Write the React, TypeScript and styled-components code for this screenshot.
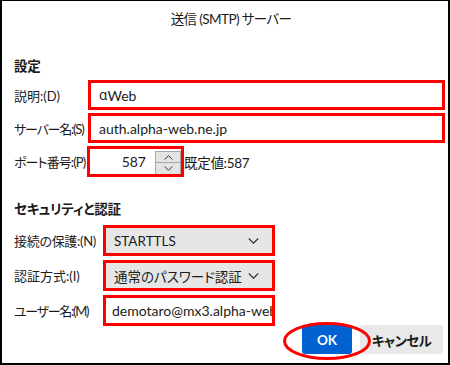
import React from "react";
import styled, { createGlobalStyle } from "styled-components";

const Global = createGlobalStyle`
  html, body { margin: 0; padding: 0; background: #fff; }
  body {
    font-family: "Lato", "Noto Sans CJK JP", sans-serif;
    color: #1b1b1b;
    font-feature-settings: "palt";
  }
`;

const Window = styled.div`
  box-sizing: border-box;
  width: 450px;
  height: 365px;
  border-left: 2px solid #000;
  border-right: 2px solid #000;
  border-top: 1px solid #000;
  border-bottom: 2px solid #000;
  background: #fff;
  display: flex;
  flex-direction: column;
  overflow: hidden;
`;

const Title = styled.div`
  height: 34px;
  display: flex;
  align-items: center;
  justify-content: center;
  font-size: 13.5px;
  letter-spacing: -0.6px;
  padding-left: 12px;
`;

const Body = styled.div`
  display: flex;
  flex-direction: column;
  padding: 0 3px 0 12px;
`;

const SectionTitle = styled.div<{ $top: number; $bottom: number }>`
  margin-top: ${(p) => p.$top}px;
  margin-bottom: ${(p) => p.$bottom}px;
  height: 20px;
  line-height: 20px;
  font-size: 13.5px;
  font-weight: 700;
  letter-spacing: -0.3px;
`;

const Row = styled.div<{ $label: number; $gap?: number }>`
  display: grid;
  grid-template-columns: ${(p) => p.$label}px auto 1fr;
  align-items: center;
  margin-bottom: ${(p) => p.$gap ?? 3}px;
`;

const Label = styled.div<{ $ls?: number }>`
  font-size: 13px;
  letter-spacing: ${(p) => p.$ls ?? 0}px;
  white-space: nowrap;
`;

const RedBox = styled.div<{ $w?: number; $h?: number; $fill?: string; $pad?: number }>`
  box-sizing: border-box;
  height: ${(p) => p.$h ?? 30}px;
  width: ${(p) => (p.$w ? `${p.$w}px` : "auto")};
  border: 3px solid #f00;
  background: ${(p) => p.$fill ?? "#fff"};
  display: flex;
  align-items: center;
  padding: 0 0 0 ${(p) => p.$pad ?? 8}px;
  font-size: 14px;
  white-space: nowrap;
  overflow: hidden;
`;

const WideBox = styled(RedBox)`
  grid-column: 2 / 4;
`;

const Greek = styled.span`
  font-family: "Noto Sans", sans-serif;
  font-size: 13.5px;
`;

const PortBox = styled(RedBox)`
  padding: 0;
  justify-content: flex-end;
  align-items: flex-start;
  gap: 9px;
`;

const PortValue = styled.span`
  align-self: center;
  font-size: 14px;
`;

const Spinner = styled.div`
  display: flex;
  flex-direction: column;
  width: 26px;
  margin-top: 2px;
`;

const SpinBtn = styled.div`
  box-sizing: border-box;
  height: 12px;
  background: #e4e4e4;
  border: 1px solid #a8a8a8;
  display: flex;
  align-items: center;
  justify-content: center;
  & + & { border-top: none; }
`;

const Default = styled.div`
  font-size: 13.5px;
  letter-spacing: -0.3px;
`;

const Select = styled(RedBox)`
  justify-content: space-between;
  padding-right: 13px;
  font-size: 13.5px;
`;

const Buttons = styled.div`
  display: flex;
  justify-content: flex-end;
  gap: 8px;
  margin-top: -1px;
  padding-right: 2px;
`;

const BtnWrap = styled.div`
  position: relative;
  display: flex;
`;

const Button = styled.button<{ $primary?: boolean }>`
  box-sizing: border-box;
  height: 29px;
  width: ${(p) => (p.$primary ? 50 : 83)}px;
  border: none;
  border-radius: 3px;
  background: ${(p) => (p.$primary ? "#0062d1" : "#e9e9e9")};
  color: ${(p) => (p.$primary ? "#fff" : "#1b1b1b")};
  font-family: inherit;
  font-feature-settings: "palt";
  font-size: 13.5px;
  letter-spacing: ${(p) => (p.$primary ? 0 : -0.6)}px;
  font-weight: 700;
  padding: 0;
`;

const Ellipse = styled.svg`
  position: absolute;
  left: -19px;
  top: -3px;
  pointer-events: none;
`;

const Chevron = ({ up = false, w = 9 }: { up?: boolean; w?: number }) => (
  <svg width={w} height={Math.round(w * 0.55)} viewBox="0 0 10 5.5">
    <path
      d={up ? "M0.7 5 L5 0.7 L9.3 5" : "M0.7 0.5 L5 4.8 L9.3 0.5"}
      fill="none"
      stroke="#333"
      strokeWidth="1.1"
    />
  </svg>
);

export default function App() {
  return (
    <>
      <Global />
      <Window>
        <Title>送信 (SMTP) サーバー</Title>
        <Body>
          <SectionTitle $top={21} $bottom={4}>設定</SectionTitle>
          <Row $label={74}>
            <Label>説明:(D)</Label>
            <WideBox>
              <Greek>α</Greek>Web
            </WideBox>
          </Row>
          <Row $label={74}>
            <Label $ls={-1.2}>サーバー名:(S)</Label>
            <WideBox>auth.alpha-web.ne.jp</WideBox>
          </Row>
          <Row $label={73} $gap={0}>
            <Label $ls={-0.9}>ポート番号:(P)</Label>
            <PortBox $w={97} $h={31}>
              <PortValue>587</PortValue>
              <Spinner>
                <SpinBtn>
                  <Chevron up />
                </SpinBtn>
                <SpinBtn>
                  <Chevron />
                </SpinBtn>
              </Spinner>
            </PortBox>
            <Default>既定値:587</Default>
          </Row>
          <SectionTitle $top={22} $bottom={6}>セキュリティと認証</SectionTitle>
          <Row $label={89} $gap={4}>
            <Label $ls={-0.3}>接続の保護:(N)</Label>
            <Select $w={172} $h={31} $fill="#e6e6e6">
              <span>STARTTLS</span>
              <Chevron w={11} />
            </Select>
          </Row>
          <Row $label={89} $gap={4}>
            <Label>認証方式:(I)</Label>
            <Select $w={172} $h={31} $fill="#e6e6e6">
              <span>通常のパスワード認証</span>
              <Chevron w={11} />
            </Select>
          </Row>
          <Row $label={89} $gap={0}>
            <Label $ls={-1.3}>ユーザー名:(M)</Label>
            <RedBox $w={172} $h={31} $pad={6}>demotaro@mx3.alpha-web.ne.jp</RedBox>
          </Row>
          <Buttons>
            <BtnWrap>
              <Button $primary>OK</Button>
              <Ellipse width="88" height="38" viewBox="0 0 88 38">
                <ellipse cx="44" cy="19" rx="42.5" ry="17.5" fill="none" stroke="#f00" strokeWidth="3" />
              </Ellipse>
            </BtnWrap>
            <Button>キャンセル</Button>
          </Buttons>
        </Body>
      </Window>
    </>
  );
}
